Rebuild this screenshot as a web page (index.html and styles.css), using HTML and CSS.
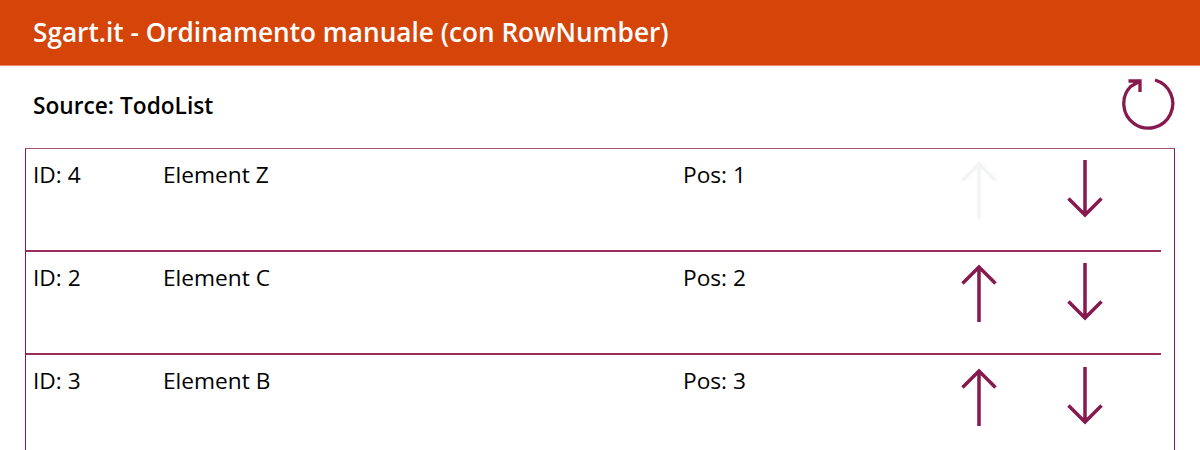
FILE: index.html
```html
<!DOCTYPE html>
<html lang="en">
<head>
    <meta charset="UTF-8">
    <title>Sgart.it - Ordinamento manuale</title>
    <link rel="stylesheet" href="styles.css">
</head>
<body>
    <div class="app">
        <header class="title-bar">Sgart.it - Ordinamento manuale (con RowNumber)</header>
        <div class="source-bar">
            <span class="source-name">Source: TodoList</span>
            <svg class="icon-reload" viewBox="0 0 54 54"><path d="M34 3A24.5 24.5 0 1 1 10 9.2L19 4M7.5 4H19V15"/></svg>
        </div>
        <div class="list">
            <div class="row">
                <span class="cell-id">ID: 4</span>
                <span class="cell-name">Element Z</span>
                <span class="cell-pos">Pos: 1</span>
                <svg class="arrow up disabled" viewBox="0 0 38 60"><path d="M19 58V3M2.5 19.5L19 3L35.5 19.5"/></svg>
                <svg class="arrow down" viewBox="0 0 38 60"><path d="M19 0V55M2.5 38.5L19 55L35.5 38.5"/></svg>
            </div>
            <div class="row">
                <span class="cell-id">ID: 2</span>
                <span class="cell-name">Element C</span>
                <span class="cell-pos">Pos: 2</span>
                <svg class="arrow up" viewBox="0 0 38 60"><path d="M19 58V3M2.5 19.5L19 3L35.5 19.5"/></svg>
                <svg class="arrow down" viewBox="0 0 38 60"><path d="M19 0V55M2.5 38.5L19 55L35.5 38.5"/></svg>
            </div>
            <div class="row">
                <span class="cell-id">ID: 3</span>
                <span class="cell-name">Element B</span>
                <span class="cell-pos">Pos: 3</span>
                <svg class="arrow up" viewBox="0 0 38 60"><path d="M19 58V3M2.5 19.5L19 3L35.5 19.5"/></svg>
                <svg class="arrow down" viewBox="0 0 38 60"><path d="M19 0V55M2.5 38.5L19 55L35.5 38.5"/></svg>
            </div>
        </div>
    </div>
</body>
</html>
```

FILE: styles.css
```css
body {
    margin: 0;
    font-family: "Open Sans", sans-serif;
    background-color: #fff;
    color: #000;
}
.app {
    height: 450px;
    overflow: hidden;
}
.title-bar {
    height: 65px;
    padding-left: 33px;
    line-height: 65px;
    font-size: 26.2px;
    font-weight: 600;
    color: #fff;
    background-color: #d5450a;
    border-bottom: 1px solid #ee8a63;
}
.source-bar {
    height: 82px;
    padding: 0 25px 0 33px;
    display: flex;
    align-items: center;
    justify-content: space-between;
}
.source-name {
    font-size: 22.7px;
    font-weight: 600;
    margin-top: -4px;
}
.icon-reload {
    width: 54px;
    height: 54px;
    align-self: flex-start;
    margin-top: 11px;
    fill: none;
    stroke: #861a4f;
    stroke-width: 3.3;
}
.list {
    margin: 0 25px;
    height: 320px;
    border: 1px solid #861a4f;
    border-top-color: #a9567c;
    padding-right: 13px;
}
.row {
    box-sizing: border-box;
    height: 103.2px;
    border-bottom: 2px solid #9b2f5c;
    padding-top: 0.5px;
    display: flex;
    align-items: flex-start;
    font-size: 22.7px;
}
.row:first-child {
    height: 102.5px;
    padding-top: 0;
}
.row:last-child {
    border-bottom: none;
}
.row span {
    padding-top: 10px;
    line-height: 32px;
}
.cell-id {
    margin-left: 7px;
    width: 130px;
}
.cell-name {
    width: 520px;
}
.cell-pos {
    width: 276.5px;
}
.arrow {
    width: 38px;
    height: 60px;
    fill: none;
    stroke: #861a4f;
    stroke-width: 3.5;
    flex-shrink: 0;
}
.arrow.up {
    margin-top: 12.4px;
}
.arrow.down {
    margin-top: 11.4px;
    margin-left: 68px;
}
.arrow.disabled {
    stroke: #f3f4f4;
}
```
